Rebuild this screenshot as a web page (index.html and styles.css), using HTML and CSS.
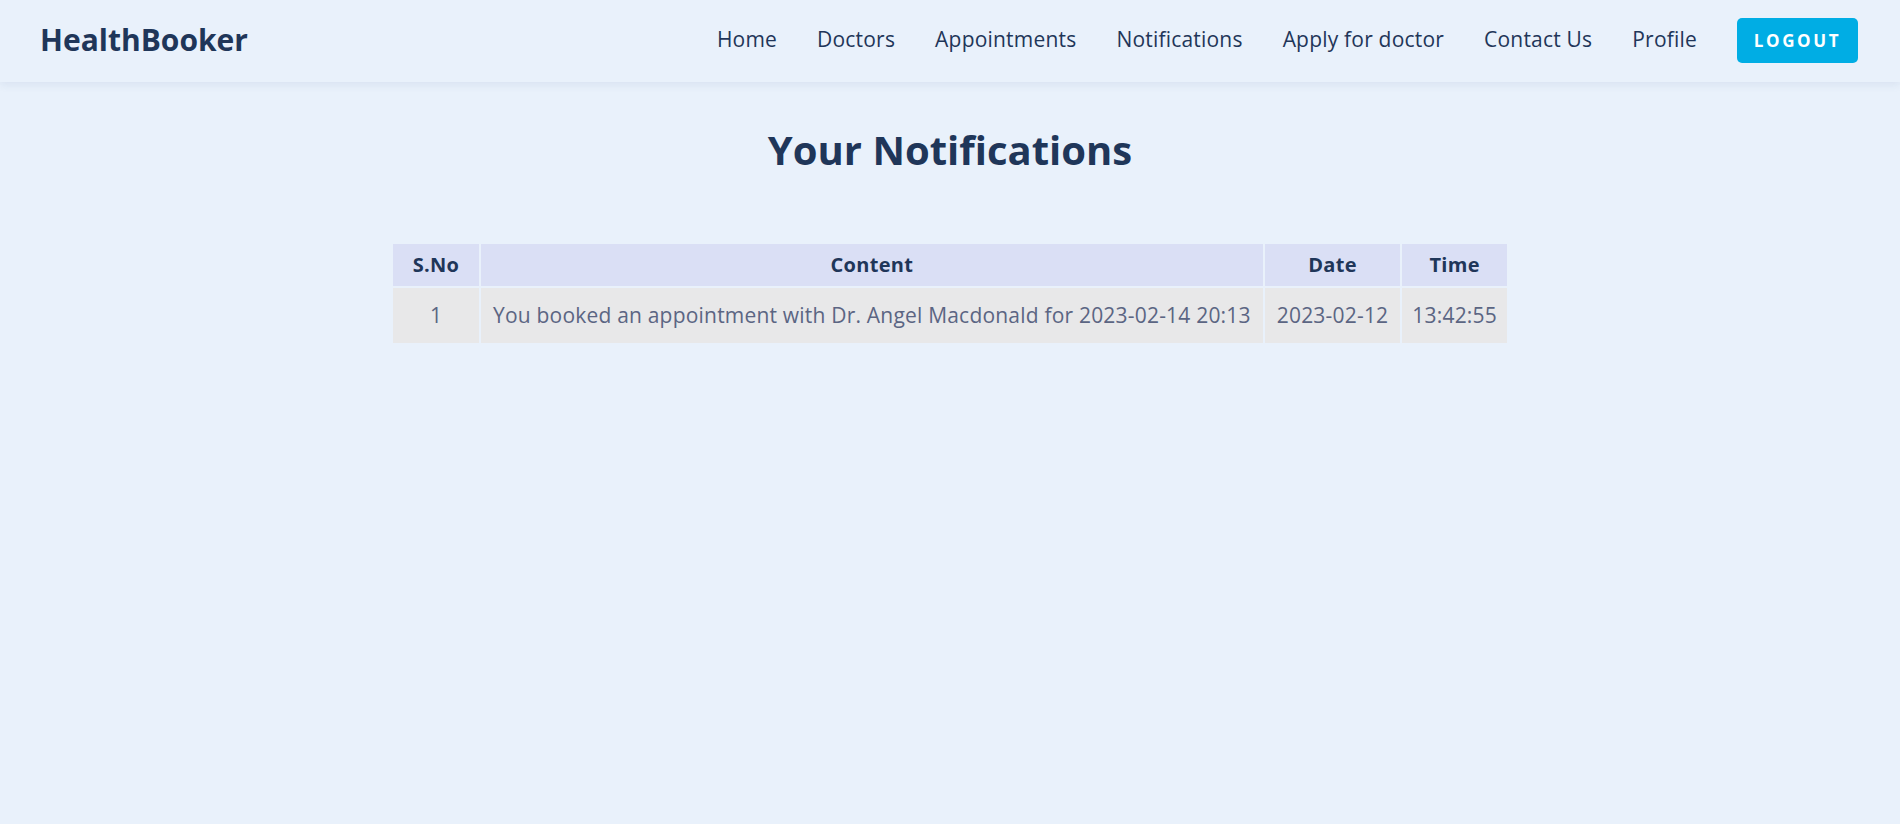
FILE: index.html
```html
<!DOCTYPE html>
<html lang="en">
<head>
<meta charset="utf-8">
<title>HealthBooker - Notifications</title>
<link rel="stylesheet" href="styles.css">
</head>
<body>
<header class="topbar">
  <a class="logo" href="#">HealthBooker</a>
  <nav class="nav">
    <a class="nav-link" href="#">Home</a>
    <a class="nav-link" href="#">Doctors</a>
    <a class="nav-link" href="#">Appointments</a>
    <a class="nav-link" href="#">Notifications</a>
    <a class="nav-link" href="#">Apply for doctor</a>
    <a class="nav-link" href="#">Contact Us</a>
    <a class="nav-link" href="#">Profile</a>
    <button class="logout">LOGOUT</button>
  </nav>
</header>
<main class="page">
  <h1 class="page-title">Your Notifications</h1>
  <table class="notif-table">
    <thead>
      <tr>
        <th class="col-sno">S.No</th>
        <th>Content</th>
        <th>Date</th>
        <th class="col-time">Time</th>
      </tr>
    </thead>
    <tbody>
      <tr>
        <td class="col-sno">1</td>
        <td>You booked an appointment with Dr. Angel Macdonald for 2023-02-14 20:13</td>
        <td>2023-02-12</td>
        <td class="col-time">13:42:55</td>
      </tr>
    </tbody>
  </table>
</main>
</body>
</html>
```

FILE: styles.css
```css
* { box-sizing: border-box; }

html, body {
  margin: 0;
  padding: 0;
}

body {
  background: #e9f1fb;
  font-family: "Open Sans", "Noto Sans", sans-serif;
  color: #1f3659;
  min-height: 824px;
}

.topbar {
  height: 82px;
  display: flex;
  align-items: center;
  justify-content: space-between;
  padding: 0 42px 4px 40px;
  background: #e9f1fb;
  box-shadow: 0 3px 8px rgba(60, 90, 140, 0.09);
}

.logo {
  font-size: 30px;
  font-weight: 700;
  color: #1f3659;
  text-decoration: none;
}

.nav {
  display: flex;
  align-items: center;
  gap: 40px;
}

.nav-link {
  font-size: 21px;
  letter-spacing: 0.2px;
  color: #1f3659;
  text-decoration: none;
}

.logout {
  font-family: inherit;
  width: 121px;
  height: 45px;
  margin-top: 2px;
  border: none;
  border-radius: 5px;
  background: #00ade4;
  color: #ffffff;
  font-size: 17px;
  font-weight: 700;
  letter-spacing: 2.6px;
  cursor: pointer;
}

.page {
  padding-top: 44px;
  text-align: center;
}

.page-title {
  margin: 0;
  font-size: 40px;
  line-height: 48px;
  font-weight: 700;
  color: #1f3659;
}

.notif-table {
  margin: 68px auto 0;
  border-spacing: 2px;
}

.notif-table th {
  background: #dadff5;
  color: #1f3659;
  font-size: 20px;
  font-weight: 700;
  letter-spacing: 0.3px;
  line-height: 26px;
  padding: 8px 12px;
}

.notif-table td {
  background: #e8e8e9;
  color: #5b6583;
  font-size: 21px;
  letter-spacing: 0.2px;
  line-height: 27px;
  padding: 14px 12px;
}

.notif-table .col-sno {
  width: 86px;
}

.notif-table .col-time {
  padding-left: 10px;
  padding-right: 10px;
}
```
